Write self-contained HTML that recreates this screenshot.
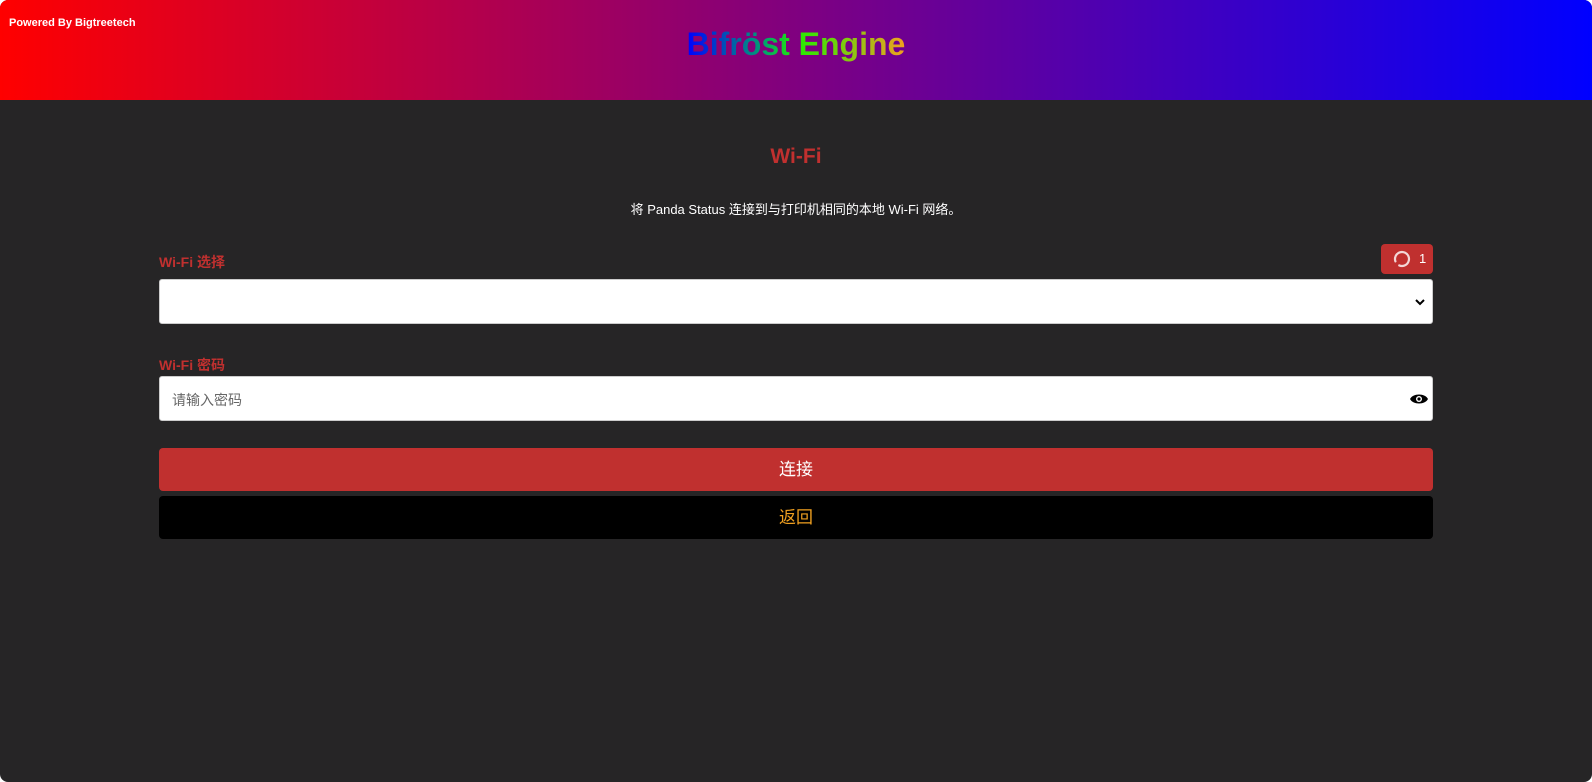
<!DOCTYPE html>
<html><head><meta charset="utf-8"><style>
html,body{margin:0;padding:0;background:#fff;}
body{width:1592px;height:782px;overflow:hidden;font-family:"Liberation Sans","Noto Sans CJK SC",sans-serif;}
.wrap{position:absolute;left:0;top:0;width:1592px;height:782px;background:#262526;border-radius:8px;overflow:hidden;}
.hdr{position:absolute;left:0;top:0;width:1592px;height:100px;background:linear-gradient(90deg,#ff0000,#0000ff);}
.pw{position:absolute;left:9px;top:17px;color:#fff;font-weight:bold;font-size:11px;}
.logo{position:absolute;left:0;width:1592px;top:26px;text-align:center;font-size:32px;font-weight:bold;}
.logo span{background:linear-gradient(90deg,#0000ff 0%,#00a070 35%,#22ee00 50%,#f0a020 100%);-webkit-background-clip:text;background-clip:text;color:transparent;}
.t{position:absolute;left:0;width:1592px;text-align:center;}
.lbl{position:absolute;left:159px;color:#c0302f;font-weight:bold;font-size:14px;}
.box{position:absolute;left:159px;width:1274px;background:#fff;border-radius:3px;box-sizing:border-box;border:1px solid #ccc;}
.btn{position:absolute;left:159px;width:1274px;border-radius:4px;text-align:center;font-size:17px;}
</style></head><body><div class="wrap">
<div class="hdr"><div class="pw">Powered By Bigtreetech</div><div class="logo"><span>Bifröst Engine</span></div></div>
<div class="t" style="top:145px;color:#c0302f;font-size:21px;font-weight:bold;">Wi-Fi</div>
<div class="t" style="top:199px;color:#fff;font-size:13px;">将 Panda Status 连接到与打印机相同的本地 Wi-Fi 网络。</div>
<div class="lbl" style="top:252px;">Wi-Fi 选择</div>
<div style="position:absolute;left:1381px;top:244px;width:52px;height:30px;background:#c0302f;border-radius:4px;">
<svg width="22" height="22" viewBox="0 0 22 22" style="position:absolute;left:10px;top:4px"><circle cx="11" cy="11" r="7" fill="none" stroke="#f3d6d6" stroke-width="2.2" stroke-linecap="round" stroke-dasharray="38 6" transform="rotate(160 11 11)"/></svg>
<span style="position:absolute;left:38px;top:7px;color:#fff;font-size:13px;">1</span></div>
<div class="box" style="top:279px;height:45px;"><svg width="12" height="8" viewBox="0 0 12 8" style="position:absolute;right:6px;top:18px"><path d="M2 2l4 4 4-4" fill="none" stroke="#000" stroke-width="2"/></svg></div>
<div class="lbl" style="top:355px;">Wi-Fi 密码</div>
<div class="box" style="top:376px;height:45px;"><span style="position:absolute;left:12px;top:13px;color:#666;font-size:14px;">请输入密码</span>
<svg width="18" height="12" viewBox="0 0 18 12" style="position:absolute;right:4px;top:16px"><path d="M0 6C3 0 15 0 18 6C15 12 3 12 0 6Z" fill="#000"/><circle cx="9" cy="6" r="3" fill="#fff"/><circle cx="9" cy="6" r="1.6" fill="#000"/></svg></div>
<div class="btn" style="top:448px;height:43px;line-height:43px;background:#c0302f;color:#fff;">连接</div>
<div class="btn" style="top:496px;height:43px;line-height:43px;background:#000;color:#f0a020;">返回</div>
</div></body></html>
